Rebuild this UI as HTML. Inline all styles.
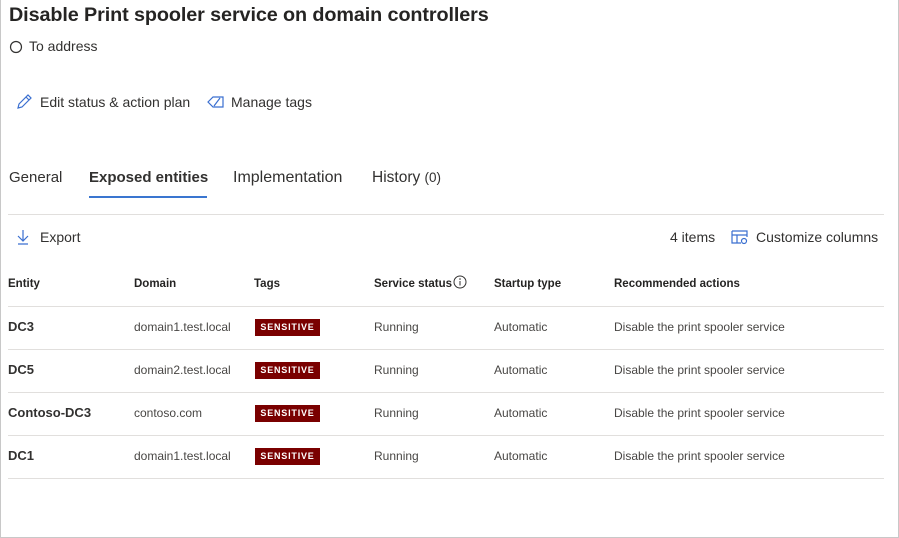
<!DOCTYPE html>
<html><head><style>
*{margin:0;padding:0;box-sizing:border-box}
body{width:899px;height:538px;background:#fff;font-family:"Liberation Sans",sans-serif;color:#323130;position:relative;overflow:hidden}
.frame{position:absolute;left:0;top:0;width:899px;height:538px;border:1px solid #c8c8c8;border-top:none}
.a{position:absolute;white-space:nowrap}
h1{position:absolute;left:9px;top:4px;font-size:19.8px;font-weight:bold;color:#252423;letter-spacing:-0.1px}
.t{font-size:15px;color:#323130}
.hd{font-size:11.5px;font-weight:bold;color:#252423;top:278px}
.row{position:absolute;left:8px;width:876px;height:43px;border-top:1px solid #e1dfdd}
.c{font-size:12px;color:#484644}
.b{background:#7a0000;color:#fff;font-size:9px;font-weight:bold;letter-spacing:0.8px;width:65px;height:17px;line-height:17px;text-align:center}
</style></head><body>
<div class="frame"></div>
<h1>Disable Print spooler service on domain controllers</h1>
<svg class="a" style="left:9px;top:40px" width="14" height="14"><circle cx="7" cy="7" r="5.5" fill="none" stroke="#323130" stroke-width="1.2"/></svg>
<div class="a" style="left:29px;top:38px;font-size:14px">To address</div>
<svg class="a" style="left:15px;top:93px" width="18" height="18"><path d="M3 15 L4 11 L13 2 L16 5 L7 14 Z M11 4 L14 7" fill="none" stroke="#3a6fd0" stroke-width="1.2"/></svg>
<div class="a" style="left:40px;top:94px;font-size:14px">Edit status &amp; action plan</div>
<svg class="a" style="left:207px;top:95px" width="18" height="14"><path d="M1 7 L6 2 H16 V12 H6 Z M7 11 L13 3" fill="none" stroke="#3a6fd0" stroke-width="1.2"/></svg>
<div class="a" style="left:231px;top:94px;font-size:14px">Manage tags</div>
<div class="a t" style="left:9px;top:169px">General</div>
<div class="a t" style="left:89px;top:169px;font-weight:bold">Exposed entities</div>
<div class="a" style="left:89px;top:196px;width:118px;height:2px;background:#3a76d0"></div>
<div class="a t" style="left:233px;top:169px;font-size:16px">Implementation</div>
<div class="a t" style="left:372px;top:169px;font-size:15.5px">History <span style="font-size:13.5px">(0)</span></div>
<div class="a" style="left:8px;top:214px;width:876px;height:1px;background:#e1dfdd"></div>
<svg class="a" style="left:16px;top:229px" width="14" height="16"><path d="M7 1 V12 M2 7 L7 12 L12 7 M2 15 H12" fill="none" stroke="#3a6fd0" stroke-width="1.2"/></svg>
<div class="a" style="left:40px;top:229px;font-size:14px">Export</div>
<div class="a" style="left:670px;top:229px;font-size:14px">4 items</div>
<svg class="a" style="left:731px;top:229px" width="18" height="16"><path d="M1 2 H16 V8 M1 2 V14 H10 M1 6 H16 M6 6 V14" fill="none" stroke="#3a6fd0" stroke-width="1.2"/><circle cx="13" cy="12" r="2.5" fill="none" stroke="#3a6fd0" stroke-width="1.2"/></svg>
<div class="a" style="left:756px;top:229px;font-size:14px">Customize columns</div>
<div class="a hd" style="left:8px">Entity</div>
<div class="a hd" style="left:134px">Domain</div>
<div class="a hd" style="left:254px">Tags</div>
<div class="a hd" style="left:374px">Service status</div>
<svg class="a" style="left:453px;top:275px" width="14" height="14"><circle cx="7" cy="7" r="6" fill="none" stroke="#323130"/><path d="M7 6 V10.5" stroke="#323130"/><circle cx="7" cy="4" r="0.8" fill="#323130"/></svg>
<div class="a hd" style="left:494px">Startup type</div>
<div class="a hd" style="left:614px">Recommended actions</div>
<div class="row" style="top:306px"></div>
<div class="row" style="top:349px"></div>
<div class="row" style="top:392px"></div>
<div class="row" style="top:435px"></div>
<div class="row" style="top:478px;height:1px"></div>

<div class="a" style="left:8px;top:319px;font-size:13px;font-weight:bold">DC3</div>
<div class="a c" style="left:134px;top:320px">domain1.test.local</div>
<div class="a b" style="left:255px;top:319px">SENSITIVE</div>
<div class="a c" style="left:374px;top:320px">Running</div>
<div class="a c" style="left:494px;top:320px">Automatic</div>
<div class="a c" style="left:614px;top:320px">Disable the print spooler service</div>

<div class="a" style="left:8px;top:362px;font-size:13px;font-weight:bold">DC5</div>
<div class="a c" style="left:134px;top:363px">domain2.test.local</div>
<div class="a b" style="left:255px;top:362px">SENSITIVE</div>
<div class="a c" style="left:374px;top:363px">Running</div>
<div class="a c" style="left:494px;top:363px">Automatic</div>
<div class="a c" style="left:614px;top:363px">Disable the print spooler service</div>

<div class="a" style="left:8px;top:405px;font-size:13px;font-weight:bold">Contoso-DC3</div>
<div class="a c" style="left:134px;top:406px">contoso.com</div>
<div class="a b" style="left:255px;top:405px">SENSITIVE</div>
<div class="a c" style="left:374px;top:406px">Running</div>
<div class="a c" style="left:494px;top:406px">Automatic</div>
<div class="a c" style="left:614px;top:406px">Disable the print spooler service</div>

<div class="a" style="left:8px;top:448px;font-size:13px;font-weight:bold">DC1</div>
<div class="a c" style="left:134px;top:449px">domain1.test.local</div>
<div class="a b" style="left:255px;top:448px">SENSITIVE</div>
<div class="a c" style="left:374px;top:449px">Running</div>
<div class="a c" style="left:494px;top:449px">Automatic</div>
<div class="a c" style="left:614px;top:449px">Disable the print spooler service</div>
</body></html>
